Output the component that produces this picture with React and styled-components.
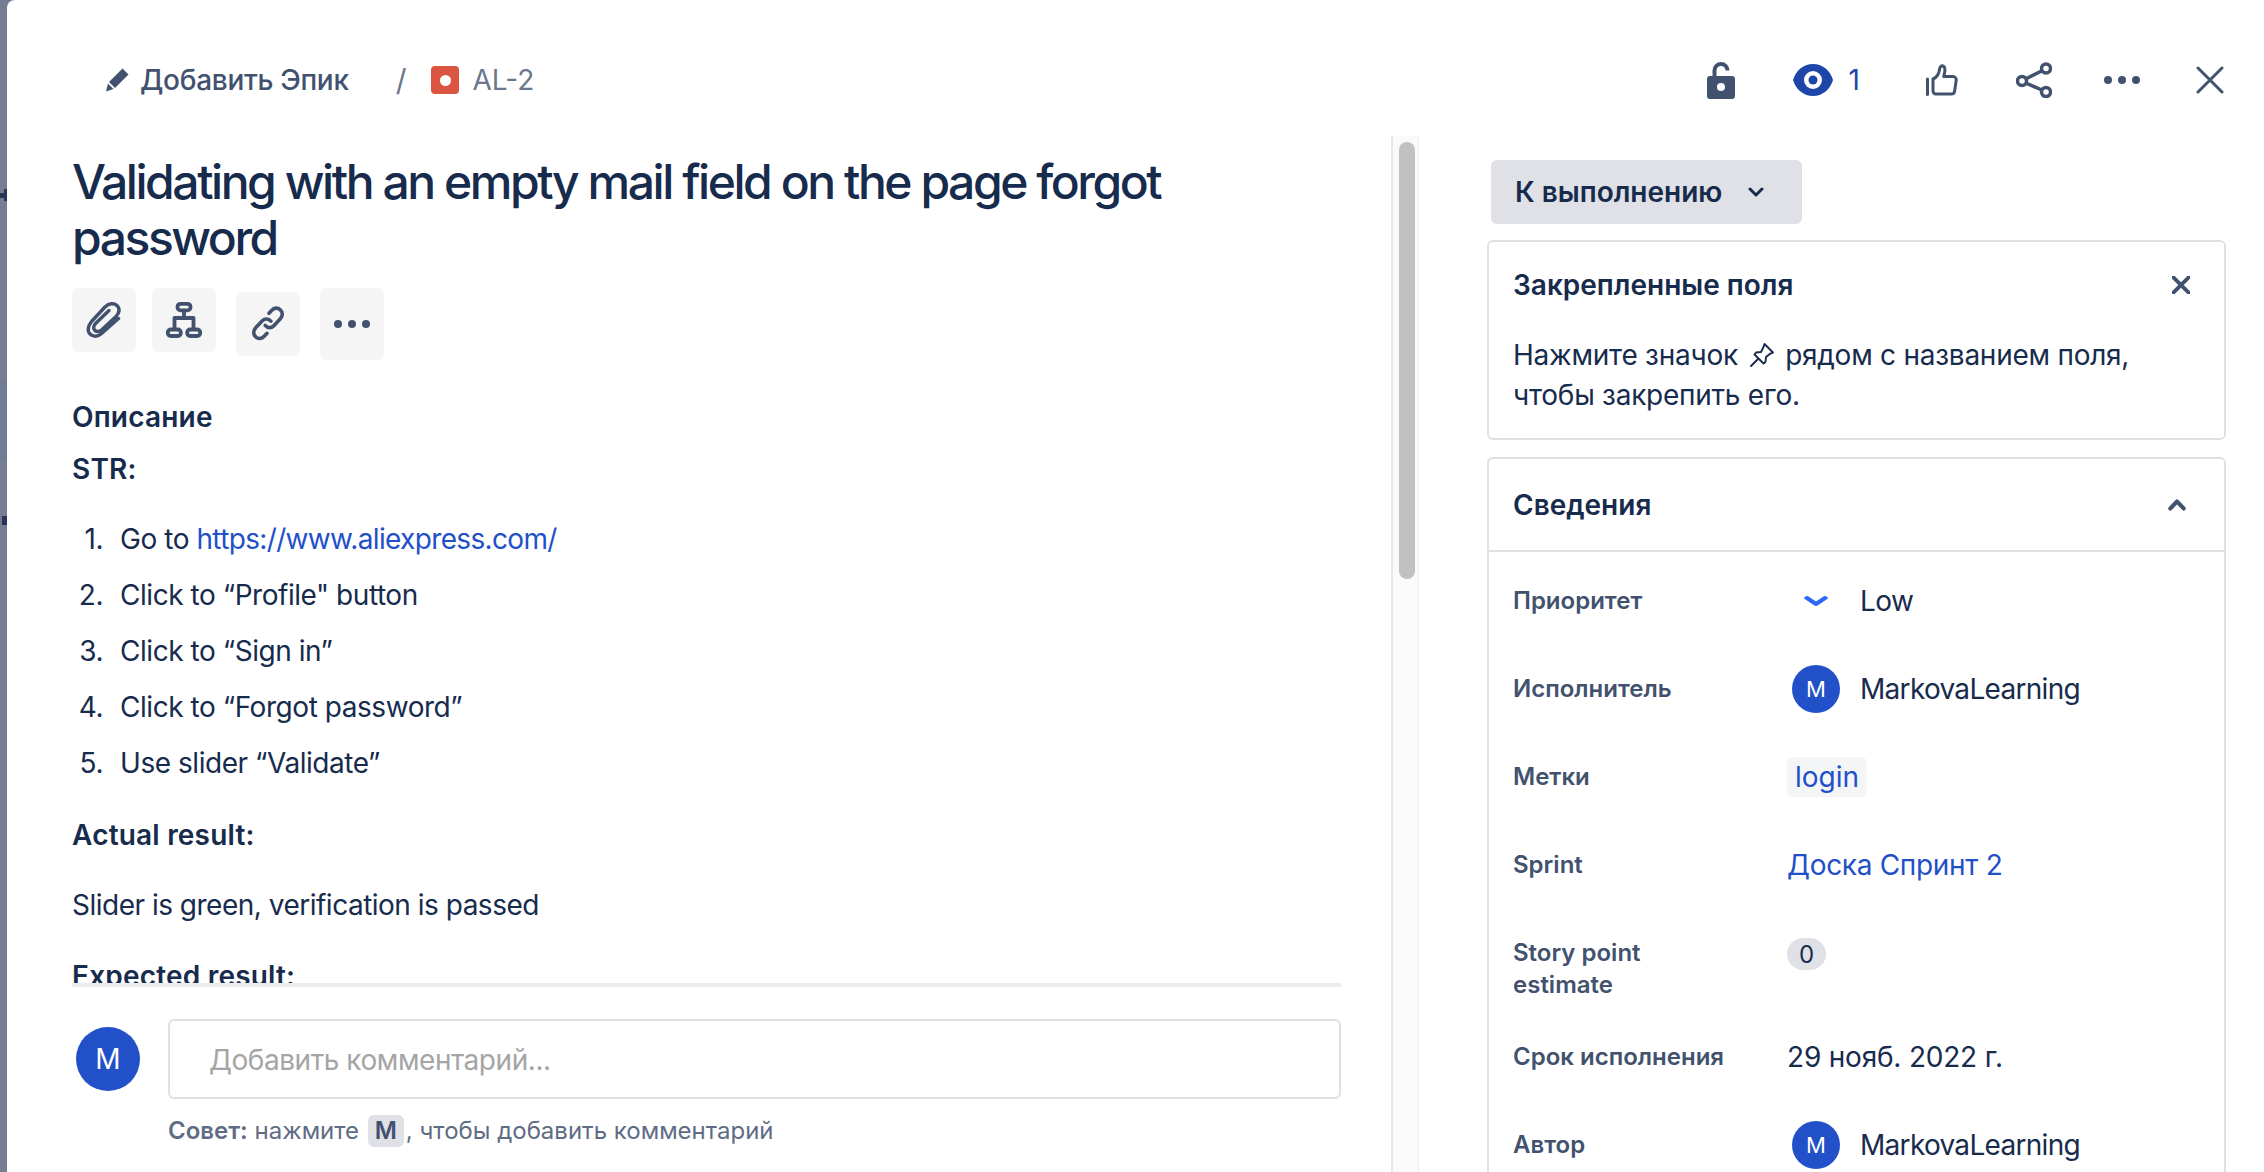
import styled, { createGlobalStyle } from 'styled-components';

const GlobalStyle = createGlobalStyle`
    * {
        box-sizing: border-box;
    }
    html, body {
        margin: 0;
        padding: 0;
        background: #ffffff;
    }
    body {
        font-family: Inter, "Noto Sans", sans-serif;
        color: #172b4d;
        -webkit-font-smoothing: antialiased;
    }
`;

function PencilIcon() {
    return (
        <svg width="24" height="24" viewBox="0 0 24 24" fill="#42526e">
            <path d="M17.500.5l6 6L10 20l-6-6z" />
            <path d="M3 15.500L8.500 21 1 23.500z" />
        </svg>
    );
}

function LockIcon() {
    return (
        <svg width="28" height="38" viewBox="0 0 28 38">
            <path d="M7.5 17V9.5a6.5 6.5 0 0 1 13 0" fill="none" stroke="#42526e" strokeWidth="4" />
            <path fillRule="evenodd" fill="#42526e" d="M3 15h22a3 3 0 0 1 3 3v17a3 3 0 0 1-3 3H3a3 3 0 0 1-3-3V18a3 3 0 0 1 3-3zm11 7a4 4 0 1 0 0 8 4 4 0 0 0 0-8z" />
        </svg>
    );
}

function EyeIcon() {
    return (
        <svg width="40" height="32" viewBox="0 0 40 32">
            <path fill="#1e46a8" d="M0 16C3 6 11 0 20 0s17 6 20 16c-3 10-11 16-20 16S3 26 0 16z" />
            <circle cx="20" cy="16" r="9" fill="#ffffff" />
            <circle cx="20" cy="16" r="4.5" fill="#1e46a8" />
        </svg>
    );
}

function ThumbIcon() {
    return (
        <svg width="32" height="32" viewBox="0 0 32 32" fill="none" stroke="#42526e" strokeWidth="3" strokeLinejoin="round" strokeLinecap="round">
            <path d="M1.5 15v15.5" />
            <path d="M7 15c3.500-1.500 6-5 6.500-9.500C14 2.500 15.500 1.500 17 2c1.800.6 2.200 3 1.700 6l-1 4.500H27a3.200 3.200 0 0 1 3.200 3.700l-1.600 11a3.200 3.200 0 0 1-3.200 2.800H10a3 3 0 0 1-3-3z" />
        </svg>
    );
}

function ShareIcon() {
    return (
        <svg width="36" height="36" viewBox="0 0 36 36" fill="none" stroke="#42526e" strokeWidth="3.5">
            <circle cx="30" cy="6.500" r="4.500" />
            <circle cx="6" cy="19" r="4.500" />
            <circle cx="30" cy="30" r="4.500" />
            <path d="M10 16.800l16-8M10 21.200l16 6.800" />
        </svg>
    );
}

function DotsIcon({ color = '#42526e' }) {
    return (
        <svg width="36" height="10" viewBox="0 0 36 10" fill={color}>
            <circle cx="4" cy="5" r="4" />
            <circle cx="18" cy="5" r="4" />
            <circle cx="32" cy="5" r="4" />
        </svg>
    );
}

function CloseIcon({ size = 28, weight = 3 }) {
    return (
        <svg width={size} height={size} viewBox="0 0 28 28" fill="none" stroke="#42526e" strokeWidth={weight} strokeLinecap="round">
            <path d="M2 2l24 24M26 2L2 26" />
        </svg>
    );
}

function ClipIcon() {
    return (
        <svg width="36" height="36" viewBox="0 0 36 36" fill="none" stroke="#42526e" strokeWidth="3.400" strokeLinecap="round" strokeLinejoin="round">
            <path d="M32.500 16.500L15 32C10 36 4 34 2.500 29.500C1.500 25.500 3 22.500 6 19L19 5C23 1 28 1 31 3.500C34 6.500 33.500 10.500 30 14.500L15.500 28C13 30 10 30 8.500 28C7 26 8 23 10 21L23 8.500" />
        </svg>
    );
}

function TreeIcon() {
    return (
        <svg width="36" height="36" viewBox="0 0 36 36" fill="none" stroke="#42526e" strokeWidth="3.800" strokeLinejoin="round">
            <rect x="11.500" y="1.800" width="13" height="6.500" rx="3" />
            <rect x="1.800" y="27.500" width="13" height="6.500" rx="3" />
            <rect x="21.200" y="27.500" width="13" height="6.500" rx="3" />
            <path d="M18 8v8M8.500 27v-11h19v11" />
        </svg>
    );
}

function ChainIcon() {
    return (
        <svg width="36" height="36" viewBox="0 0 36 38" fill="none" stroke="#42526e" strokeWidth="3.800" strokeLinecap="round">
            <path d="M15 20.500c2.500 3 6.500 3 9 .5l7-7.500c2.800-3 2.800-7 0-9.500s-6.500-2.300-9 .5l-3 3.200" />
            <path d="M21 16c-2.500-3-6.500-3-9-.5l-7 7.500c-2.800 3-2.800 7 0 9.500s6.500 2.300 9-.5l3-3.200" />
        </svg>
    );
}

function PinIcon() {
    return (
        <svg width="26" height="26" viewBox="0 0 26 26" fill="none" stroke="#172b4d" strokeWidth="1.900" strokeLinejoin="round" strokeLinecap="round">
            <path d="M15.500 2l8.500 8.500-2.500 1-4.500 3.500-.5 5-2 1.500-9-9 1.500-2 5-.5L14.500 5z" />
            <path d="M9 17l-7 7" />
        </svg>
    );
}

function ChevronIcon({ up, color = '#172b4d', width = 16, height = 10, weight = 3 }) {
    return (
        <svg width={width} height={height} viewBox="0 0 16 10" fill="none" stroke={color} strokeWidth={weight} strokeLinecap="round" strokeLinejoin="round" preserveAspectRatio="none">
            <path d={up ? 'M2 8l6-6 6 6' : 'M2 2l6 6 6-6'} />
        </svg>
    );
}

function Person() {
    return (
        <>
            <SmallAvatar>M</SmallAvatar>
            <PersonName>MarkovaLearning</PersonName>
        </>
    );
}

export default function App() {
    const steps = [
        <>Go to <Link href="#">https://www.aliexpress.com/</Link></>,
        <>Click to “Profile" button</>,
        <>Click to “Sign in”</>,
        <>Click to “Forgot password”</>,
        <>Use slider “Validate”</>,
    ];

    return (
        <>
            <GlobalStyle />
            <Page>
                <Backdrop>
                    <BackdropBit $top={193} $height={5} $width={4} />
                    <BackdropBit $top={189} $height={12} $width={3} $right />
                    <BackdropBit $top={516} $height={9} $width={5} $right />
                </Backdrop>
                <Modal>
                    <Header>
                        <Crumbs>
                            <PencilIcon />
                            <EpicText>Добавить Эпик</EpicText>
                            <Slash>/</Slash>
                            <IssueType><IssueDot /></IssueType>
                            <IssueKey>AL-2</IssueKey>
                        </Crumbs>
                        <Actions>
                            <LockIcon />
                            <Action $ml={58}>
                                <EyeIcon />
                                <WatchCount>1</WatchCount>
                            </Action>
                            <Action $ml={66}><ThumbIcon /></Action>
                            <Action $ml={58}><ShareIcon /></Action>
                            <Action $ml={52}><DotsIcon /></Action>
                            <Action $ml={56}><CloseIcon /></Action>
                        </Actions>
                    </Header>
                    <Content>
                        <Main>
                            <Scroll>
                                <Title>Validating with an empty mail field on the page forgot password</Title>
                                <Tools>
                                    <Tool><ClipIcon /></Tool>
                                    <Tool $ml={16}><TreeIcon /></Tool>
                                    <Tool $ml={20} $mt={4}><ChainIcon /></Tool>
                                    <Tool $ml={20} $h={72}><DotsIcon /></Tool>
                                </Tools>
                                <Strong $mt={37}>Описание</Strong>
                                <Strong $mt={12}>STR:</Strong>
                                <Steps>
                                    {steps.map((step, i) => (
                                        <Step key={i}>
                                            <StepNumber>{i + 1}.</StepNumber>
                                            <span>{step}</span>
                                        </Step>
                                    ))}
                                </Steps>
                                <Strong $mt={32}>Actual result:</Strong>
                                <Text $mt={30}>Slider is green, verification is passed</Text>
                                <Strong $mt={31}>Expected result:</Strong>
                            </Scroll>
                            <Divider />
                            <CommentRow>
                                <Avatar>M</Avatar>
                                <CommentBox>Добавить комментарий...</CommentBox>
                            </CommentRow>
                            <Tip>
                                <b>Совет:</b> нажмите <Key>M</Key>, чтобы добавить комментарий
                            </Tip>
                        </Main>
                        <Track>
                            <Thumb />
                        </Track>
                        <Side>
                            <StatusButton>
                                К выполнению
                                <ChevronIcon />
                            </StatusButton>
                            <PinnedCard>
                                <CardHead>
                                    <CardTitle>Закрепленные поля</CardTitle>
                                    <CloseIcon size={18} weight={6} />
                                </CardHead>
                                <PinnedText>
                                    Нажмите значок <PinIcon /> рядом с названием поля, чтобы закрепить его.
                                </PinnedText>
                            </PinnedCard>
                            <DetailsCard>
                                <DetailsHead>
                                    <CardTitle>Сведения</CardTitle>
                                    <ChevronIcon up width={18} height={12} color="#42526e" weight={3.500} />
                                </DetailsHead>
                                <Fields>
                                    <Field>
                                        <FieldLabel>Приоритет</FieldLabel>
                                        <FieldValue>
                                            <PriorityMark><ChevronIcon width={24} height={10} color="#2a6af5" weight={3.600} /></PriorityMark>
                                            <LowText>Low</LowText>
                                        </FieldValue>
                                    </Field>
                                    <Field>
                                        <FieldLabel>Исполнитель</FieldLabel>
                                        <FieldValue><Person /></FieldValue>
                                    </Field>
                                    <Field>
                                        <FieldLabel>Метки</FieldLabel>
                                        <FieldValue><Tag>login</Tag></FieldValue>
                                    </Field>
                                    <Field>
                                        <FieldLabel>Sprint</FieldLabel>
                                        <FieldValue><SprintLink href="#">Доска Спринт 2</SprintLink></FieldValue>
                                    </Field>
                                    <Field>
                                        <FieldLabel>Story point<br />estimate</FieldLabel>
                                        <FieldValue><Badge>0</Badge></FieldValue>
                                    </Field>
                                    <Field>
                                        <FieldLabel>Срок исполнения</FieldLabel>
                                        <FieldValue $ls={-0.2}>29 нояб. 2022 г.</FieldValue>
                                    </Field>
                                    <Field>
                                        <FieldLabel>Автор</FieldLabel>
                                        <FieldValue><Person /></FieldValue>
                                    </Field>
                                </Fields>
                            </DetailsCard>
                        </Side>
                    </Content>
                </Modal>
            </Page>
        </>
    );
}

const Page = styled.div`
    width: 2264px;
    height: 1172px;
    overflow: hidden;
    display: flex;
    background: #737c95;
`;

const Backdrop = styled.div`
    position: relative;
    width: 7px;
    flex-shrink: 0;
    background: linear-gradient(to bottom, #767c92 381px, #6f7c98 381px, #6f7c98 460px, #767c92 460px);
`;

const BackdropBit = styled.span`
    position: absolute;
    top: ${props => props.$top}px;
    ${props => (props.$right ? 'right: 0;' : 'left: 0;')}
    width: ${props => props.$width}px;
    height: ${props => props.$height}px;
    background: #28345a;
`;

const Modal = styled.div`
    flex: 1;
    min-width: 0;
    display: flex;
    flex-direction: column;
    background: #ffffff;
    border-top-left-radius: 8px;
`;

const Header = styled.div`
    height: 136px;
    flex-shrink: 0;
    display: flex;
    justify-content: space-between;
    align-items: center;
    padding: 24px 40px 0 98px;
`;

const Crumbs = styled.div`
    display: flex;
    align-items: center;
`;

const EpicText = styled.span`
    margin-left: 11px;
    font-size: 28px;
    font-weight: 500;
    letter-spacing: -0.3px;
    color: #42526e;
`;

const Slash = styled.span`
    margin-left: 47px;
    font-size: 30px;
    color: #6b778c;
`;

const IssueType = styled.span`
    margin-left: 25px;
    width: 28px;
    height: 28px;
    border-radius: 4px;
    background: #db5642;
    display: flex;
    align-items: center;
    justify-content: center;
`;

const IssueDot = styled.span`
    width: 11px;
    height: 11px;
    border-radius: 50%;
    background: #ffffff;
`;

const IssueKey = styled.span`
    margin-left: 13px;
    font-size: 28px;
    color: #6b778c;
`;

const Actions = styled.div`
    display: flex;
    align-items: center;
`;

const Action = styled.span`
    margin-left: ${props => props.$ml}px;
    display: flex;
    align-items: center;
`;

const WatchCount = styled.span`
    margin-left: 16px;
    font-size: 28px;
    color: #1e46a8;
`;

const Content = styled.div`
    flex: 1;
    min-height: 0;
    display: flex;
`;

const Main = styled.div`
    width: 1384px;
    flex-shrink: 0;
    display: flex;
    flex-direction: column;
    padding: 0 50px 0 65px;
`;

const Scroll = styled.div`
    height: 847px;
    flex-shrink: 0;
    overflow: hidden;
    padding-top: 18px;
`;

const Title = styled.h1`
    margin: 0;
    font-size: 48px;
    line-height: 56px;
    font-weight: 500;
    letter-spacing: -2.45px;
    color: #172b4d;
`;

const Tools = styled.div`
    display: flex;
    align-items: flex-start;
    margin-top: 22px;
`;

const Tool = styled.button`
    width: 64px;
    height: ${props => props.$h || 64}px;
    margin-left: ${props => props.$ml || 0}px;
    margin-top: ${props => props.$mt || 0}px;
    padding: 0;
    border: 0;
    border-radius: 6px;
    background: #f5f5f5;
    display: flex;
    align-items: center;
    justify-content: center;
`;

const Strong = styled.div`
    margin-top: ${props => props.$mt}px;
    font-size: 28px;
    line-height: 40px;
    font-weight: 600;
    letter-spacing: 0.2px;
`;

const Text = styled.div`
    margin-top: ${props => props.$mt}px;
    font-size: 28px;
    line-height: 40px;
    letter-spacing: -0.5px;
`;

const Steps = styled.ol`
    list-style: none;
    margin: 30px 0 0;
    padding: 0;
    display: flex;
    flex-direction: column;
    gap: 16px;
    font-size: 28px;
    line-height: 40px;
    letter-spacing: -0.45px;
`;

const Step = styled.li`
    display: flex;
`;

const StepNumber = styled.span`
    width: 31px;
    margin-right: 17px;
    text-align: right;
`;

const Link = styled.a`
    color: #1f50c8;
    text-decoration: none;
    letter-spacing: -0.65px;
`;

const SprintLink = styled(Link)`
    letter-spacing: -0.3px;
`;

const Divider = styled.div`
    height: 4px;
    flex-shrink: 0;
    background: #ebecf0;
`;

const CommentRow = styled.div`
    display: flex;
    align-items: flex-start;
    margin-top: 32px;
`;

const Avatar = styled.div`
    width: 64px;
    height: 64px;
    margin: 8px 28px 0 4px;
    flex-shrink: 0;
    border-radius: 50%;
    background: #2250c8;
    color: #ffffff;
    font-size: 28px;
    display: flex;
    align-items: center;
    justify-content: center;
`;

const CommentBox = styled.div`
    flex: 1;
    height: 80px;
    padding: 2px 40px 0 39px;
    border: 2px solid #dfe1e6;
    border-radius: 6px;
    font-size: 28px;
    letter-spacing: -0.45px;
    color: #a5a5a5;
    display: flex;
    align-items: center;
`;

const Tip = styled.div`
    margin: 16px 0 0 96px;
    font-size: 24px;
    line-height: 32px;
    color: #5e6c84;
    b {
        font-weight: 600;
    }
`;

const Key = styled.span`
    display: inline-block;
    width: 36px;
    height: 32px;
    margin: 0 2px 0 2px;
    border-radius: 6px;
    background: #dfe1e6;
    color: #42526e;
    font-weight: 600;
    text-align: center;
`;

const Track = styled.div`
    width: 28px;
    flex-shrink: 0;
    padding: 6px 6px 0 6px;
    background: #fafafa;
    border-left: 2px solid #e8e8e8;
    border-right: 1px solid #eeeeee;
`;

const Thumb = styled.div`
    width: 16px;
    height: 437px;
    border-radius: 8px;
    background: #c1c1c1;
`;

const Side = styled.div`
    width: 739px;
    margin-left: 68px;
    flex-shrink: 0;
    padding-top: 24px;
`;

const StatusButton = styled.div`
    width: 311px;
    height: 64px;
    margin-left: 4px;
    padding: 0 38px 0 24px;
    border-radius: 6px;
    background: #dfe1e6;
    font-size: 28px;
    font-weight: 600;
    display: flex;
    align-items: center;
    justify-content: space-between;
`;

const PinnedCard = styled.div`
    height: 200px;
    margin-top: 16px;
    padding: 23px 24px 0 24px;
    border: 2px solid #dfe1e6;
    border-radius: 6px;
`;

const CardHead = styled.div`
    display: flex;
    align-items: center;
    justify-content: space-between;
    padding-right: 10px;
`;

const CardTitle = styled.div`
    font-size: 28px;
    line-height: 40px;
    font-weight: 600;
`;

const PinnedText = styled.p`
    margin: 30px 0 0;
    font-size: 28px;
    line-height: 40px;
    letter-spacing: -0.25px;
    svg {
        margin: 0 3px;
        vertical-align: -3px;
    }
`;

const DetailsCard = styled.div`
    margin-top: 17px;
    border: 2px solid #dfe1e6;
    border-radius: 6px 6px 0 0;
    border-bottom: 0;
`;

const DetailsHead = styled.div`
    height: 93px;
    padding: 0 38px 0 24px;
    border-bottom: 2px solid #dfe1e6;
    display: flex;
    align-items: center;
    justify-content: space-between;
`;

const Fields = styled.div`
    padding: 5px 24px 0;
`;

const Field = styled.div`
    min-height: 88px;
    padding: 28px 0 12px;
    display: grid;
    grid-template-columns: 274px 1fr;
    align-items: start;
`;

const FieldLabel = styled.div`
    font-size: 24px;
    line-height: 32px;
    font-weight: 600;
    color: #42526e;
`;

const FieldValue = styled.div`
    height: 32px;
    font-size: 28px;
    letter-spacing: ${props => props.$ls || 0}px;
    display: flex;
    align-items: center;
`;

const PriorityMark = styled.span`
    width: 73px;
    padding-left: 17px;
    display: flex;
    align-items: center;
`;

const SmallAvatar = styled.span`
    width: 48px;
    height: 48px;
    margin: 0 20px 0 5px;
    flex-shrink: 0;
    border-radius: 50%;
    background: #2250c8;
    color: #ffffff;
    font-size: 22px;
    display: flex;
    align-items: center;
    justify-content: center;
`;

const PersonName = styled.span`
    color: #172b4d;
    letter-spacing: -0.7px;
`;

const LowText = styled.span`
    color: #172b4d;
    letter-spacing: -0.5px;
`;

const Tag = styled.span`
    height: 40px;
    padding: 0 8px;
    border-radius: 6px;
    background: #f4f5f7;
    color: #1f50c8;
    display: flex;
    align-items: center;
`;

const Badge = styled.span`
    min-width: 39px;
    height: 32px;
    margin-top: 2px;
    border-radius: 16px;
    background: #dfe1e6;
    font-size: 24px;
    display: flex;
    align-items: center;
    justify-content: center;
`;
